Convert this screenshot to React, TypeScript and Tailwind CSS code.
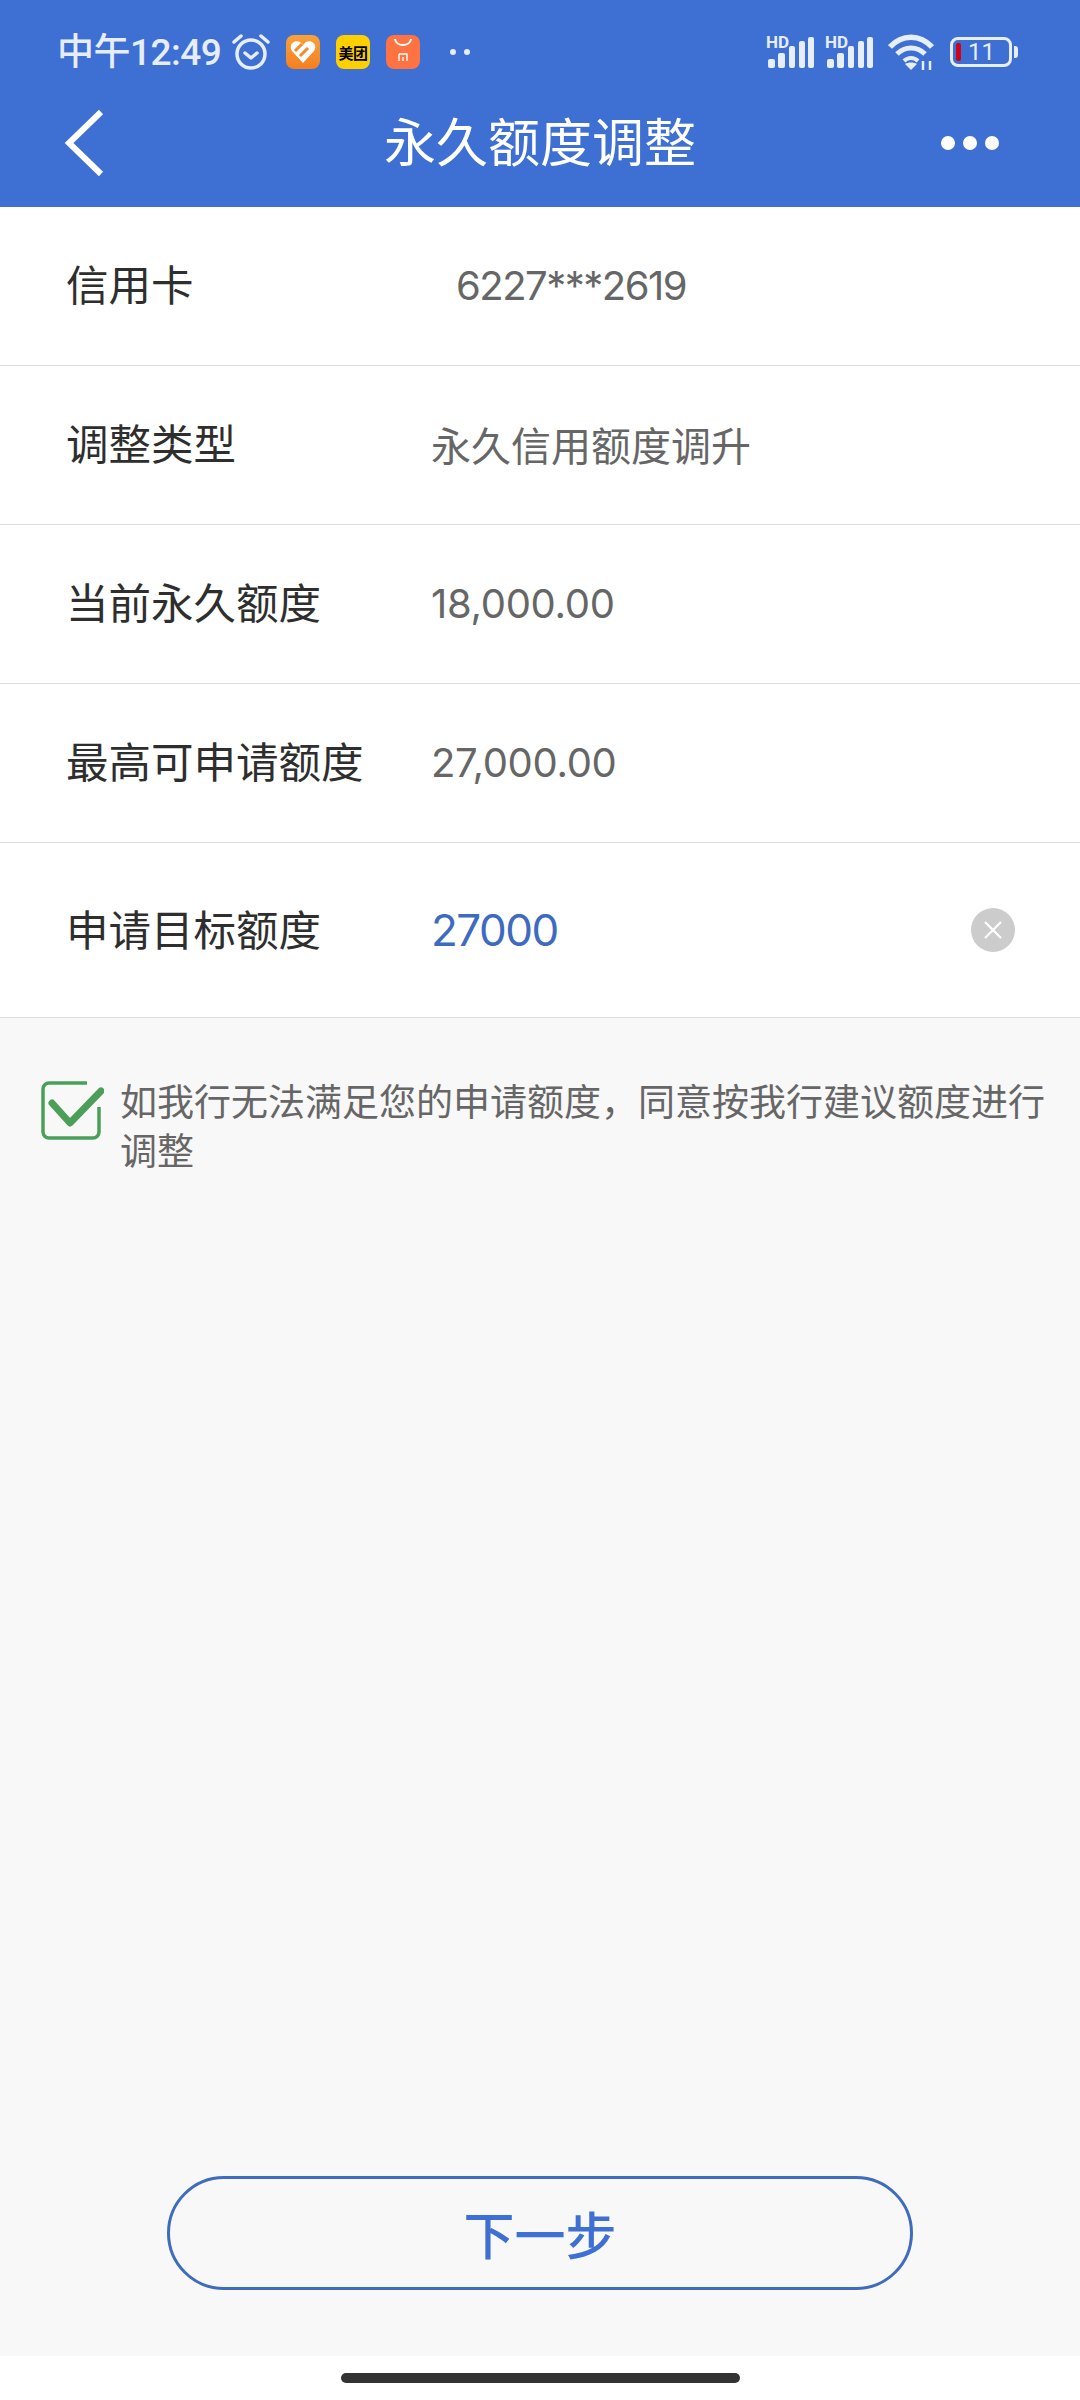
import React from "react";

const font = { fontFamily: '"Noto Sans CJK SC", sans-serif' };

function Row({ label, value, pl = "pl-[431px]", h = "h-[159px]", valueClass = "tracking-[-0.3px] font-['Inter',sans-serif]" }: { label: string; value: string; pl?: string; h?: string; valueClass?: string }) {
  return (
    <div className={`flex items-center ${h} border-b border-[#dedede] bg-white`}>
      <div className="w-[432px] pl-[66px] pb-[5px] text-[42.5px] leading-none text-[#2e2e2e] shrink-0 -mr-[432px]">{label}</div>
      <div className={`${pl} text-[40px] leading-none text-[#666666] ${valueClass}`}>{value}</div>
    </div>
  );
}

function Signal() {
  return (
    <svg width="50" height="34" viewBox="0 0 50 34" fill="#e6edfb" className="overflow-visible">
      <text x="0" y="13" fontSize="17" fontWeight="700" fontFamily="Roboto, sans-serif" textLength="23">HD</text>
      <rect x="2" y="24" width="7" height="9" rx="2" />
      <rect x="12" y="18" width="7" height="15" rx="2" />
      <rect x="23" y="11" width="6" height="22" rx="2" />
      <rect x="33" y="6" width="6" height="27" rx="2" />
      <rect x="42" y="2" width="6" height="31" rx="2" />
    </svg>
  );
}

export default function App() {
  return (
    <div className="w-[1080px] h-[2400px] flex flex-col bg-white overflow-hidden" style={font}>
      <header className="h-[207px] bg-[#3e6fd2] flex flex-col shrink-0">
        <div className="h-[72px] pt-[32px] pl-[57px] pr-[62px] flex items-center">
          <span className="text-[37px] leading-none text-[#e6edfb] tracking-[-0.5px] font-medium font-['Roboto','Noto_Sans_CJK_SC',sans-serif] w-[174px] whitespace-nowrap">中午12:49</span>
          <svg width="40" height="38" viewBox="0 0 40 38" fill="none" stroke="#e6edfb" strokeWidth="3.5">
            <circle cx="20" cy="21" r="14" />
            <path d="M14 20l6 5 6-5" strokeLinecap="round" strokeLinejoin="round" />
            <path d="M3 9l7-6M37 9l-7-6" strokeLinecap="round" />
          </svg>
          <div className="w-[34px] h-[34px] ml-[15px] rounded-[8px] bg-gradient-to-b from-[#f9a13a] to-[#f57f1e] flex items-center justify-center">
            <svg width="26" height="24" viewBox="0 0 26 24" fill="#fff">
              <path d="M13 23L2 11C-2 5 4-1 10 2l3 3 3-3c6-3 12 3 8 9z" />
              <path d="M5 11l7-7M10 16l8-8" stroke="#f58a26" strokeWidth="3" />
            </svg>
          </div>
          <div className="w-[34px] h-[34px] ml-[16px] rounded-[8px] bg-[#ffd000] flex items-center justify-center text-[15px] tracking-[-0.5px] leading-none font-bold text-black whitespace-nowrap">美团</div>
          <div className="w-[34px] h-[34px] ml-[16px] rounded-[8px] bg-[#ff7342] flex items-center justify-center">
            <svg width="24" height="28" viewBox="0 0 24 28" fill="none" stroke="#fff" strokeWidth="1.4">
              <path d="M4 1c1 8 15 8 16 0" strokeWidth="2" />
              <path d="M8 16h8v7M8 16v7M12 19v4" />
            </svg>
          </div>
          <div className="ml-[30px] flex gap-[8px]">
            <span className="w-[6px] h-[6px] rounded-full bg-[#e6edfb]" />
            <span className="w-[6px] h-[6px] rounded-full bg-[#e6edfb]" />
          </div>
          <div className="ml-auto flex items-center">
            <Signal />
            <div className="ml-[9px]"><Signal /></div>
            <svg width="46" height="36" viewBox="0 0 46 36" fill="none" stroke="#e6edfb" className="ml-[13px]">
              <path d="M2 13C14 0 32 0 44 13" strokeWidth="5.5" />
              <path d="M9 20c8-8 20-8 28 0" strokeWidth="5" />
              <path d="M16 27c4-4 10-4 14 0" strokeWidth="4" />
              <path d="M23 36l-6-6c3-2 9-2 12 0z" fill="#e6edfb" stroke="none" />
              <path d="M35 36V27M42 36V27" strokeWidth="2.5" />
            </svg>
            <div className="ml-[16px] flex items-center">
              <div className="w-[62px] h-[30px] rounded-[8px] border-[3px] border-[#e6edfb] flex items-center pl-[3px]">
                <span className="w-[5px] h-[18px] rounded-[2px] bg-[#d0021b]" />
                <span className="ml-[7px] text-[24px] leading-none text-[#e6edfb] font-['Roboto',sans-serif]">11</span>
              </div>
              <span className="w-[4px] h-[12px] ml-[2px] rounded-r-[3px] bg-[#e6edfb]" />
            </div>
          </div>
        </div>
        <div className="flex-1 grid grid-cols-[1fr_auto_1fr] items-center">
          <div className="pl-[64px] pt-[7px]">
            <svg width="40" height="68" viewBox="0 0 40 68" fill="none" stroke="#fff" strokeWidth="6" className="block">
              <path d="M37 3L5 34l32 31" />
            </svg>
          </div>
          <h1 className="text-[52px] leading-none font-normal text-white">永久额度调整</h1>
          <div className="flex justify-end gap-[8px] pr-[81px] pt-[6px]">
            <span className="w-[14px] h-[14px] rounded-full bg-white" />
            <span className="w-[14px] h-[14px] rounded-full bg-white" />
            <span className="w-[14px] h-[14px] rounded-full bg-white" />
          </div>
        </div>
      </header>

      <main className="flex-1 flex flex-col bg-[#f8f8f8]">
        <Row label="信用卡" value="6227***2619" pl="pl-[456px]" valueClass="tracking-[-1.5px] font-['Inter',sans-serif]" />
        <Row label="调整类型" value="永久信用额度调升" valueClass="pb-[2px]" />
        <Row label="当前永久额度" value="18,000.00" />
        <Row label="最高可申请额度" value="27,000.00" />
        <div className="flex items-center h-[175px] border-b border-[#dedede] bg-white">
          <div className="w-[431px] pl-[66px] pb-[3px] text-[42.5px] leading-none text-[#2e2e2e]">申请目标额度</div>
          <div className="text-[44px] leading-none tracking-[-1.5px] text-[#3e6bbf] font-['Inter',sans-serif]">27000</div>
          <div className="ml-auto mr-[65px] w-[44px] h-[44px] rounded-full bg-[#cccccc] flex items-center justify-center">
            <svg width="20" height="20" viewBox="0 0 20 20" stroke="#fff" strokeWidth="2.2"><path d="M2 2l16 16M18 2L2 18" /></svg>
          </div>
        </div>

        <div className="flex pt-[62px] pl-[40px] pr-[30px]">
          <svg width="64" height="60" viewBox="0 0 64 60" fill="none" className="shrink-0">
            <path d="M59 27V52a6 6 0 0 1-6 6H9a6 6 0 0 1-6-6V9a6 6 0 0 1 6-6H47" stroke="#4c9f58" strokeWidth="3.5" />
            <path d="M12 23L30 43L61 11" stroke="#4c9f58" strokeWidth="7" strokeLinecap="round" strokeLinejoin="round" />
          </svg>
          <p className="ml-[16px] -mt-[4px] text-[37px] leading-[49px] text-[#666666] break-all">如我行无法满足您的申请额度，同意按我行建议额度进行调整</p>
        </div>

        <div className="mt-auto mb-[66px] mx-[167px] h-[114px] rounded-full border-[3px] border-[#3f6cbd] flex items-center justify-center text-[51px] leading-none text-[#3e6fd2] font-medium">下一步</div>
      </main>

      <div className="h-[44px] shrink-0 bg-white flex justify-center pt-[17px]">
        <div className="w-[399px] h-[10px] rounded-full bg-[#333333]" />
      </div>
    </div>
  );
}
